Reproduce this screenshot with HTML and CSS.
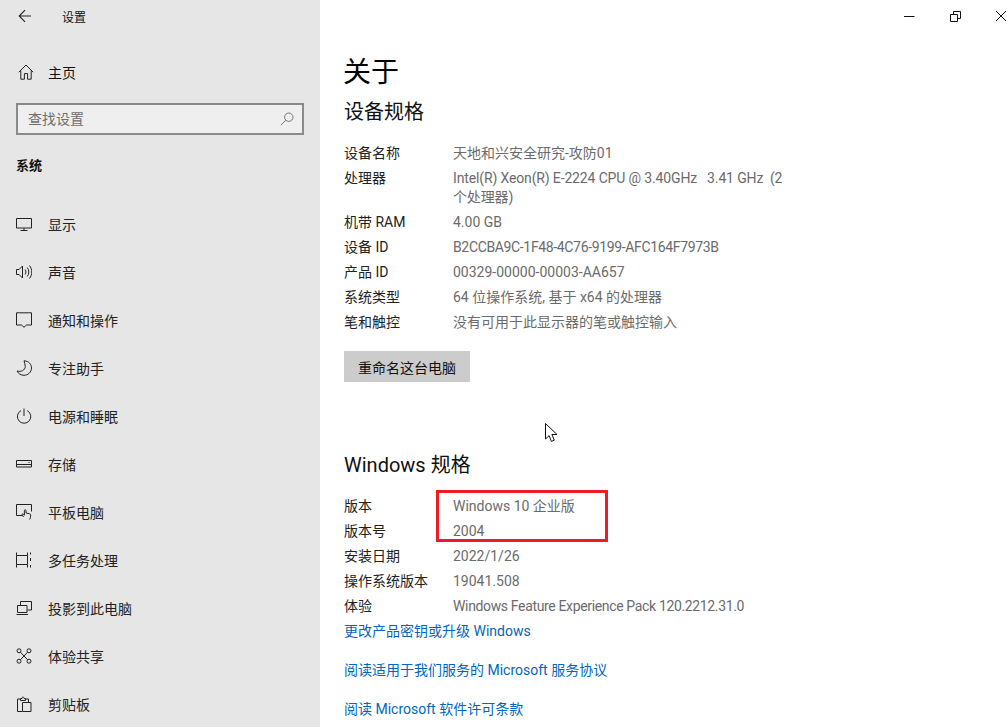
FILE: index.html
```html
<!DOCTYPE html>
<html lang="zh-CN">
<head>
<meta charset="utf-8">
<title>设置</title>
<link rel="stylesheet" href="styles.css">
</head>
<body>
<div class="window">
  <aside class="sidebar">
    <div class="titlebar">
      <svg class="back" width="14" height="14" viewBox="0 0 14 14"><path d="M13 7H1.500M7 1.200 1.200 7 7 12.800"/></svg>
      <span>设置</span>
    </div>
    <div class="home">
      <svg class="ico" width="16" height="16" viewBox="0 0 16 16"><path d="M.8 8.200 8 1l7.200 7.200M2.800 6.600v8.600h3.600V9.600h3.200v5.600h3.600V6.600"/></svg>
      <span>主页</span>
    </div>
    <div class="search">
      <span class="search-text">查找设置</span>
      <svg class="ico search-ico" width="14" height="14" viewBox="0 0 14 14"><circle cx="8.800" cy="5.200" r="4.200"/><path d="M5.800 8.200.8 13.200"/></svg>
    </div>
    <div class="group">系统</div>
    <nav class="nav">
      <div class="nav-item"><svg class="ico" width="16" height="16" viewBox="0 0 16 16"><path d="M.5 2.500h15v9.500H.5zM8 12v3M4.500 14.500h7"/></svg><span>显示</span></div>
      <div class="nav-item"><svg class="ico" width="16" height="16" viewBox="0 0 16 16"><path d="M.5 5.500h2.600L6.500 2v12L3.100 10.500H.5zM9 5.500c1.200 1.500 1.200 3.500 0 5M11.300 3.500c2 2.600 2 6.400 0 9M13.500 1.500c3 3.800 3 9.200 0 13"/></svg><span>声音</span></div>
      <div class="nav-item"><svg class="ico" width="16" height="16" viewBox="0 0 16 16"><path d="M.5 .8h15v12.200h-5L8 15.300 5.500 13h-5z"/></svg><span>通知和操作</span></div>
      <div class="nav-item"><svg class="ico" width="16" height="16" viewBox="0 0 16 16"><path d="M8 .8c5 .2 7.500 3.700 7.500 7.200 0 4-3.400 7.300-7.500 7.300-3 0-5.700-1.700-7-4.300 4.300 1.300 8-1 8.300-4.300C9 4.300 8.500 2.300 8 .8z"/></svg><span>专注助手</span></div>
      <div class="nav-item"><svg class="ico" width="16" height="16" viewBox="0 0 16 16"><path d="M5 2.600a6.700 6.700 0 1 0 6.200 0M8 .5v7.500"/></svg><span>电源和睡眠</span></div>
      <div class="nav-item"><svg class="ico" width="16" height="16" viewBox="0 0 16 16"><path d="M.5 4.500h15v6.500H.5zM.5 8.500h15M12.500 6.500h1"/></svg><span>存储</span></div>
      <div class="nav-item"><svg class="ico" width="16" height="16" viewBox="0 0 16 16"><path d="M6 11.500H.5v-11h15v7M7.500 13l-1.300-2.200c-.4-.8.600-1.400 1.200-.8l1 1.200V6.500c0-1 1.600-1 1.600 0V9l3.700.8c.6.100 1 .6 1 1.300 0 1.500-.3 3-1 4.400"/></svg><span>平板电脑</span></div>
      <div class="nav-item"><svg class="ico" width="16" height="16" viewBox="0 0 16 16"><path d="M.5 .5v3h11v-3M.5 15.500v-3h11v3M.5 3.500v9M11.500 3.500v9M14.500 .5v2M14.500 6v3M14.500 13v2.500"/></svg><span>多任务处理</span></div>
      <div class="nav-item"><svg class="ico" width="16" height="16" viewBox="0 0 16 16"><path d="M4.500 5V1.500h11v8.500h-4M1.500 5.500h9.500v7H1.500zM.5 14.500h11.500"/></svg><span>投影到此电脑</span></div>
      <div class="nav-item"><svg class="ico" width="16" height="16" viewBox="0 0 16 16"><circle cx="3" cy="2.800" r="2"/><circle cx="13" cy="2.800" r="2"/><circle cx="3" cy="13.200" r="2"/><circle cx="13" cy="13.200" r="2"/><path d="M4.500 4.300 11.500 11.700M11.500 4.300 4.500 11.700"/></svg><span>体验共享</span></div>
      <div class="nav-item"><svg class="ico" width="16" height="16" viewBox="0 0 16 16"><path d="M6 15.500H1.500V3h3M9.500 3h3v3M4.500 4.500V2.500h1.500C6 .5 8 .5 8 2.500h1.500v2zM6.500 6.500h8.500v9H6.500z"/></svg><span>剪贴板</span></div>
    </nav>
  </aside>

  <main class="content">
    <div class="controls">
      <svg width="12" height="12" viewBox="0 0 12 12"><path d="M1 6.500h10.500"/></svg>
      <svg width="12" height="12" viewBox="0 0 12 12"><path d="M.5 4.500h7v7h-7zM3.500 4.500v-3h7v7h-3"/></svg>
      <svg width="12" height="12" viewBox="0 0 12 12"><path d="M1 1l10 10M11 1 1 11"/></svg>
    </div>
    <h1 class="title">关于</h1>
    <h2 class="heading">设备规格</h2>
    <dl class="specs">
      <div class="row"><dt>设备名称</dt><dd>天地和兴安全研究-攻防01</dd></div>
      <div class="row"><dt>处理器</dt><dd class="snug">Intel(R) Xeon(R) E-2224 CPU @ 3.40GHz&nbsp;&nbsp; 3.41 GHz&nbsp; (2<br>个处理器)</dd></div>
      <div class="row"><dt>机带 RAM</dt><dd>4.00 GB</dd></div>
      <div class="row"><dt>设备 ID</dt><dd class="tight">B2CCBA9C-1F48-4C76-9199-AFC164F7973B</dd></div>
      <div class="row"><dt>产品 ID</dt><dd>00329-00000-00003-AA657</dd></div>
      <div class="row"><dt>系统类型</dt><dd>64 位操作系统, 基于 x64 的处理器</dd></div>
      <div class="row"><dt>笔和触控</dt><dd>没有可用于此显示器的笔或触控输入</dd></div>
    </dl>
    <button class="rename">重命名这台电脑</button>
    <h2 class="heading win">Windows 规格</h2>
    <dl class="specs">
      <div class="row"><dt>版本</dt><dd>Windows 10 企业版</dd></div>
      <div class="row"><dt>版本号</dt><dd>2004</dd></div>
      <div class="row"><dt>安装日期</dt><dd>2022/1/26</dd></div>
      <div class="row"><dt>操作系统版本</dt><dd>19041.508</dd></div>
      <div class="row"><dt>体验</dt><dd class="tight">Windows Feature Experience Pack 120.2212.31.0</dd></div>
    </dl>
    <a class="link first">更改产品密钥或升级 Windows</a>
    <a class="link">阅读适用于我们服务的 Microsoft 服务协议</a>
    <a class="link">阅读 Microsoft 软件许可条款</a>
    <div class="redbox"></div>
    <svg class="cursor" width="13" height="20" viewBox="0 0 13 20"><path d="M.5.5v15.500l3.600-3.400 2.300 5.800 2.900-1.200-2.400-5.700h5.100z"/></svg>
  </main>
</div>
</body>
</html>
```

FILE: styles.css
```css
* { box-sizing: border-box; }
html, body { margin: 0; height: 727px; overflow: hidden; }
body {
  font-family: Roboto, "Noto Sans CJK SC", sans-serif;
  font-size: 14px;
  color: #111;
  background: #fff;
}
.window { display: flex; width: 1007px; height: 727px; overflow: hidden; }

.sidebar { width: 320px; flex: none; background: #e6e6e6; padding-left: 16px; overflow: hidden; }
.ico { fill: none; stroke: #222; stroke-width: 1; flex: none; }
.titlebar { display: flex; align-items: center; height: 32px; font-size: 12px; }
.back { fill: none; stroke: #222; stroke-width: 1.100; margin-left: 2px; margin-right: 30px; }
.home { display: flex; align-items: center; gap: 16px; height: 48px; margin-top: 16px; margin-left: 2px; margin-bottom: 7px; }
.home span { margin-left: -2px; }
.search {
  display: flex; align-items: center; justify-content: space-between;
  width: 288px; height: 32px; padding: 0 8px 0 10px;
  background: #efefef; border: 2px solid #8a8a8a; color: #6e6e6e;
}
.search-text { margin-top: -2px; }
.search-ico { stroke: #777; }
.group { font-weight: 700; height: 20px; line-height: 20px; margin-top: 21px; font-size: 13px; }
.nav { margin-top: 24px; }
.nav-item { display: flex; align-items: center; gap: 16px; height: 48px; color: #222; }

.content { position: relative; flex: 1; padding-left: 24px; overflow: hidden; }
.controls { position: absolute; top: 10px; right: 0; display: flex; gap: 33px; }
.controls svg { fill: none; stroke: #111; stroke-width: 1; }
.controls svg:first-child { margin-right: 2px; }
.title { margin: 53px 0 0 -1px; font-size: 28px; font-weight: 400; line-height: 40px; color: #000; }
.heading { margin: 5px 0 0; font-size: 20px; font-weight: 400; line-height: 28px; color: #111; }
.heading.win { margin-top: 69px; }
.specs { margin: 15px 0 0; }
.row { display: flex; min-height: 25px; line-height: 19px; padding-top: 3px; padding-bottom: 3px; }
.row dt { width: 109px; flex: none; color: #222; }
.row dd { margin: 0; white-space: nowrap; color: #6b6b6b; }
.row .tight { letter-spacing: -.35px; }
.row .snug { letter-spacing: -.14px; }
.rename {
  display: block; margin: 16px 0 0; padding: 0; width: 126px; height: 31px;
  border: 0; background: #cccccc; color: #111; font: inherit;
}
.link { display: block; color: #0067c0; line-height: 20px; margin-top: 19px; }
.link.first { margin-top: 2px; }
.redbox { position: absolute; left: 116px; top: 490px; width: 172px; height: 52px; border: 3px solid #ed1c24; }
.cursor { position: absolute; left: 225px; top: 423px; fill: #fff; stroke: #111; stroke-width: 1; }
```
